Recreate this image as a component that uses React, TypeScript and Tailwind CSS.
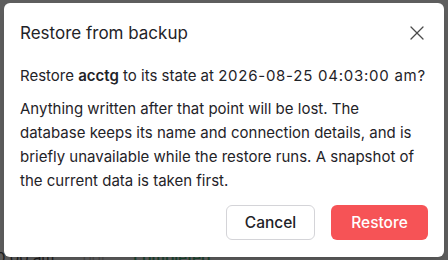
import { X } from "lucide-react";

export default function App() {
  return (
    <div className="relative h-[260px] w-[448px] overflow-hidden bg-[#5e5e5e] font-['Inter',sans-serif]">
      {/* faint page behind the overlay */}
      <div className="absolute bottom-[-9px] left-[-4px] flex gap-7 text-[15px] text-[#1c1c1c]">
        <span>0:00 am</span>
        <span className="text-[#4a4a4a]">bot</span>
        <span className="font-semibold text-[#1d4630]">completed</span>
      </div>

      <div className="absolute left-[4px] top-[3px] flex h-[254px] w-[440px] flex-col rounded-md bg-white px-4 pb-[17px] pt-[18px] shadow-lg">
        <div className="flex items-center justify-between">
          <h2 className="text-[17px] leading-6 text-[#1f2328]">Restore from backup</h2>
          <button className="mr-[-1px] text-[#4b4b4b]">
            <X size={24} strokeWidth={1.3} />
          </button>
        </div>

        <p className="mt-[19px] text-[15px] leading-6 text-[#1f2328]">
          Restore <b className="font-semibold">acctg</b> to its state at{" "}
          <span className="tracking-[0.05em]">2026-08-25 04:03:00 am?</span>
        </p>
        <p className="mt-[9px] text-[15px] leading-6 text-[#1f2328]">
          Anything written after that point will be lost. The database keeps its name and
          connection details, and is briefly unavailable while the restore runs. A snapshot
          of the current data is taken first.
        </p>

        <div className="mt-auto flex justify-end gap-4">
          <button className="h-[35px] w-[89px] rounded-md border border-[#d4d4d8] bg-white text-[15.5px] font-medium text-[#1f2328]">
            Cancel
          </button>
          <button className="h-[35px] w-[97px] rounded-md bg-[#f65356] text-[15.5px] font-medium text-white">
            Restore
          </button>
        </div>
      </div>
    </div>
  );
}
